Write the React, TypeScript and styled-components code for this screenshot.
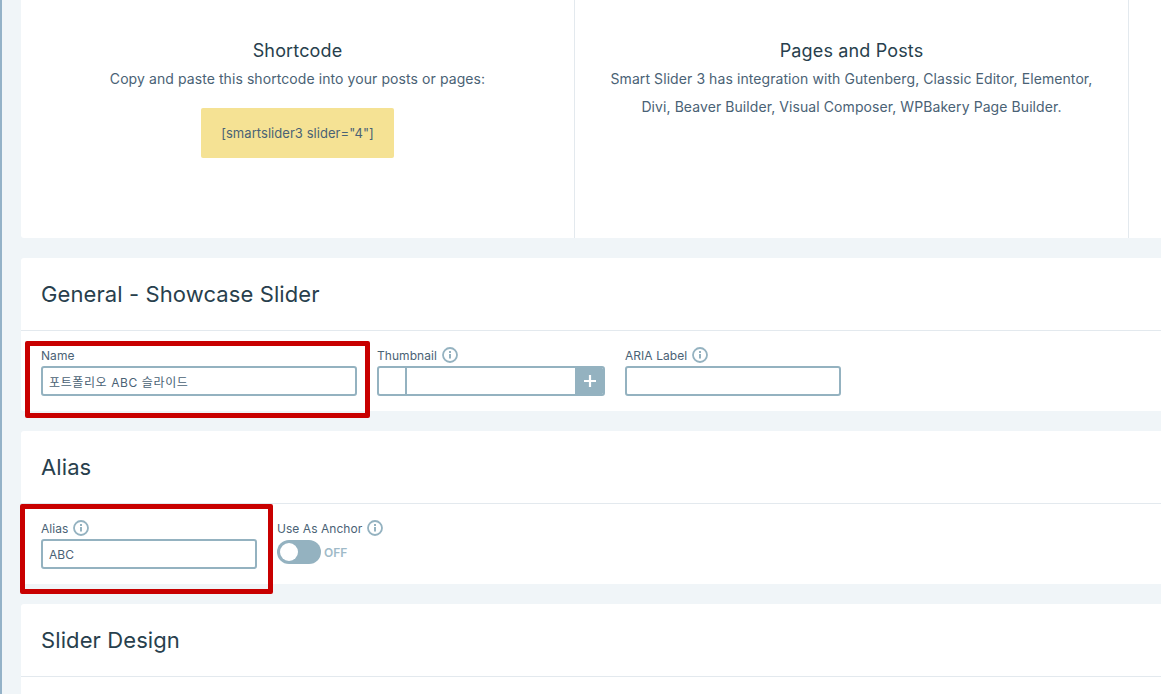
import React from "react";
import styled, { createGlobalStyle } from "styled-components";

const Global = createGlobalStyle`
  html, body { margin: 0; padding: 0; height: 694px; overflow: hidden; background: #f0f5f8; }
  * { box-sizing: border-box; }
`;

const Page = styled.div`
  position: relative;
  width: 1161px;
  height: 694px;
  overflow: hidden;
  background: #f0f5f8;
  border-left: 2px solid #94b2c8;
  padding-left: 19px;
  font-family: Inter, "Noto Sans CJK KR", sans-serif;
  color: #283f4d;
  display: flex;
  flex-direction: column;
  gap: 20px;
`;

const InfoCard = styled.section`
  flex: none;
  width: 1200px;
  height: 238px;
  background: #fff;
  border-radius: 0 0 0 3px;
  display: flex;
`;

const InfoColumn = styled.div`
  flex: none;
  width: 554px;
  height: 100%;
  padding-top: 40px;
  border-right: 1px solid #e3e9ee;
  text-align: center;
`;

const InfoTitle = styled.h3`
  margin: 0 0 3px;
  font-size: 18px;
  font-weight: 400;
  line-height: 22px;
  letter-spacing: 0.15px;
  color: #283f4d;
`;

const InfoText = styled.p`
  margin: 0;
  font-size: 14px;
  line-height: 28px;
  letter-spacing: 0.08px;
  color: #4a6275;
  padding: 0 34px;
`;

const Code = styled.div`
  width: 193px;
  height: 50px;
  margin: 15px auto 0;
  background: #f5e294;
  border-radius: 2px;
  display: flex;
  align-items: center;
  justify-content: center;
  font-size: 13px;
  letter-spacing: 0.05px;
  color: #4a6275;
`;

const Card = styled.section`
  flex: none;
  width: 1200px;
  background: #fff;
  border-radius: 3px 0 0 3px;
`;

const LastCard = styled(Card)`
  flex: 1;
  border-radius: 3px 0 0 0;
`;

const CardHeader = styled.header`
  height: 73px;
  padding: 0 20px;
  border-bottom: 1px solid #e3e9ee;
  display: flex;
  align-items: center;
`;

const CardTitle = styled.h2`
  margin: 0;
  font-size: 22px;
  font-weight: 400;
  color: #283f4d;
  letter-spacing: 0.1px;
`;

const FormRow = styled.div`
  height: 80px;
  padding: 15px 20px 0;
  display: flex;
  gap: 20px;
`;

const Field = styled.div<{ $w: number }>`
  width: ${(p) => p.$w}px;
  flex: none;
`;

const Label = styled.div`
  height: 18px;
  margin-bottom: 2px;
  display: flex;
  align-items: center;
  gap: 5px;
  font-size: 12px;
  letter-spacing: 0.05px;
  color: #4a6275;
`;

const TextInput = styled.div<{ $hangul?: boolean }>`
  height: 30px;
  border: 2px solid #94b2c0;
  border-radius: 3px;
  padding: 0 6px;
  display: flex;
  align-items: center;
  font-size: 12px;
  letter-spacing: ${(p) => (p.$hangul ? "0.6px" : "0")};
  color: #4a6275;
  background: #fff;
`;

const ThumbInput = styled.div`
  height: 30px;
  display: flex;
  border: 2px solid #94b2c0;
  border-radius: 3px;
  overflow: hidden;
`;

const ThumbPreview = styled.div`
  width: 28px;
  border-right: 2px solid #94b2c0;
`;

const ThumbField = styled.div`
  flex: 1;
`;

const AddButton = styled.div`
  width: 28px;
  background: #94b2c0;
  display: flex;
  align-items: center;
  justify-content: center;
  padding-left: 1px;
`;

const ToggleRow = styled.div`
  display: flex;
  align-items: center;
  gap: 3px;
  height: 24px;
  margin-top: 3px;
`;

const Toggle = styled.div`
  width: 44px;
  height: 24px;
  border-radius: 12px;
  background: #94b2c0;
  padding: 3px 2px;
`;

const Knob = styled.div`
  width: 18px;
  height: 18px;
  margin-left: 1px;
  border-radius: 50%;
  background: #fff;
`;

const ToggleText = styled.span`
  font-size: 12px;
  font-weight: 600;
  color: #9fbac8;
`;

const Highlight = styled.div<{ $x: number; $y: number; $w: number; $h: number }>`
  position: absolute;
  left: ${(p) => p.$x}px;
  top: ${(p) => p.$y}px;
  width: ${(p) => p.$w}px;
  height: ${(p) => p.$h}px;
  border: 5px solid #c80000;
  border-radius: 2px;
`;

const Info = () => (
  <svg width="16" height="16" viewBox="0 0 16 16" fill="none" stroke="#94b2c0" aria-hidden="true">
    <circle cx="8" cy="8" r="7" strokeWidth="1.8" />
    <path d="M8 7v4.6M8 4.1v1.8" strokeWidth="2" />
  </svg>
);

const Plus = () => (
  <svg width="14" height="14" viewBox="0 0 14 14" fill="none" stroke="#fff" strokeWidth="2.2" aria-hidden="true">
    <path d="M7 1v12M1 7h12" />
  </svg>
);

export default function App() {
  return (
    <Page>
      <Global />
      <InfoCard>
        <InfoColumn>
          <InfoTitle>Shortcode</InfoTitle>
          <InfoText>Copy and paste this shortcode into your posts or pages:</InfoText>
          <Code>[smartslider3 slider="4"]</Code>
        </InfoColumn>
        <InfoColumn>
          <InfoTitle>Pages and Posts</InfoTitle>
          <InfoText>
            Smart Slider 3 has integration with Gutenberg, Classic Editor, Elementor, Divi, Beaver Builder, Visual Composer, WPBakery Page Builder.
          </InfoText>
        </InfoColumn>
      </InfoCard>

      <Card>
        <CardHeader>
          <CardTitle>General - Showcase Slider</CardTitle>
        </CardHeader>
        <FormRow>
          <Field $w={316}>
            <Label>Name</Label>
            <TextInput $hangul>포트폴리오 ABC 슬라이드</TextInput>
          </Field>
          <Field $w={228}>
            <Label>Thumbnail <Info /></Label>
            <ThumbInput>
              <ThumbPreview />
              <ThumbField />
              <AddButton><Plus /></AddButton>
            </ThumbInput>
          </Field>
          <Field $w={216}>
            <Label>ARIA Label <Info /></Label>
            <TextInput />
          </Field>
        </FormRow>
      </Card>

      <Card>
        <CardHeader>
          <CardTitle>Alias</CardTitle>
        </CardHeader>
        <FormRow>
          <Field $w={216}>
            <Label>Alias <Info /></Label>
            <TextInput>ABC</TextInput>
          </Field>
          <Field $w={120}>
            <Label>Use As Anchor <Info /></Label>
            <ToggleRow>
              <Toggle><Knob /></Toggle>
              <ToggleText>OFF</ToggleText>
            </ToggleRow>
          </Field>
        </FormRow>
      </Card>

      <LastCard>
        <CardHeader>
          <CardTitle>Slider Design</CardTitle>
        </CardHeader>
      </LastCard>

      <Highlight $x={23} $y={341} $w={345} $h={77} />
      <Highlight $x={18} $y={504} $w={253} $h={90} />
    </Page>
  );
}
